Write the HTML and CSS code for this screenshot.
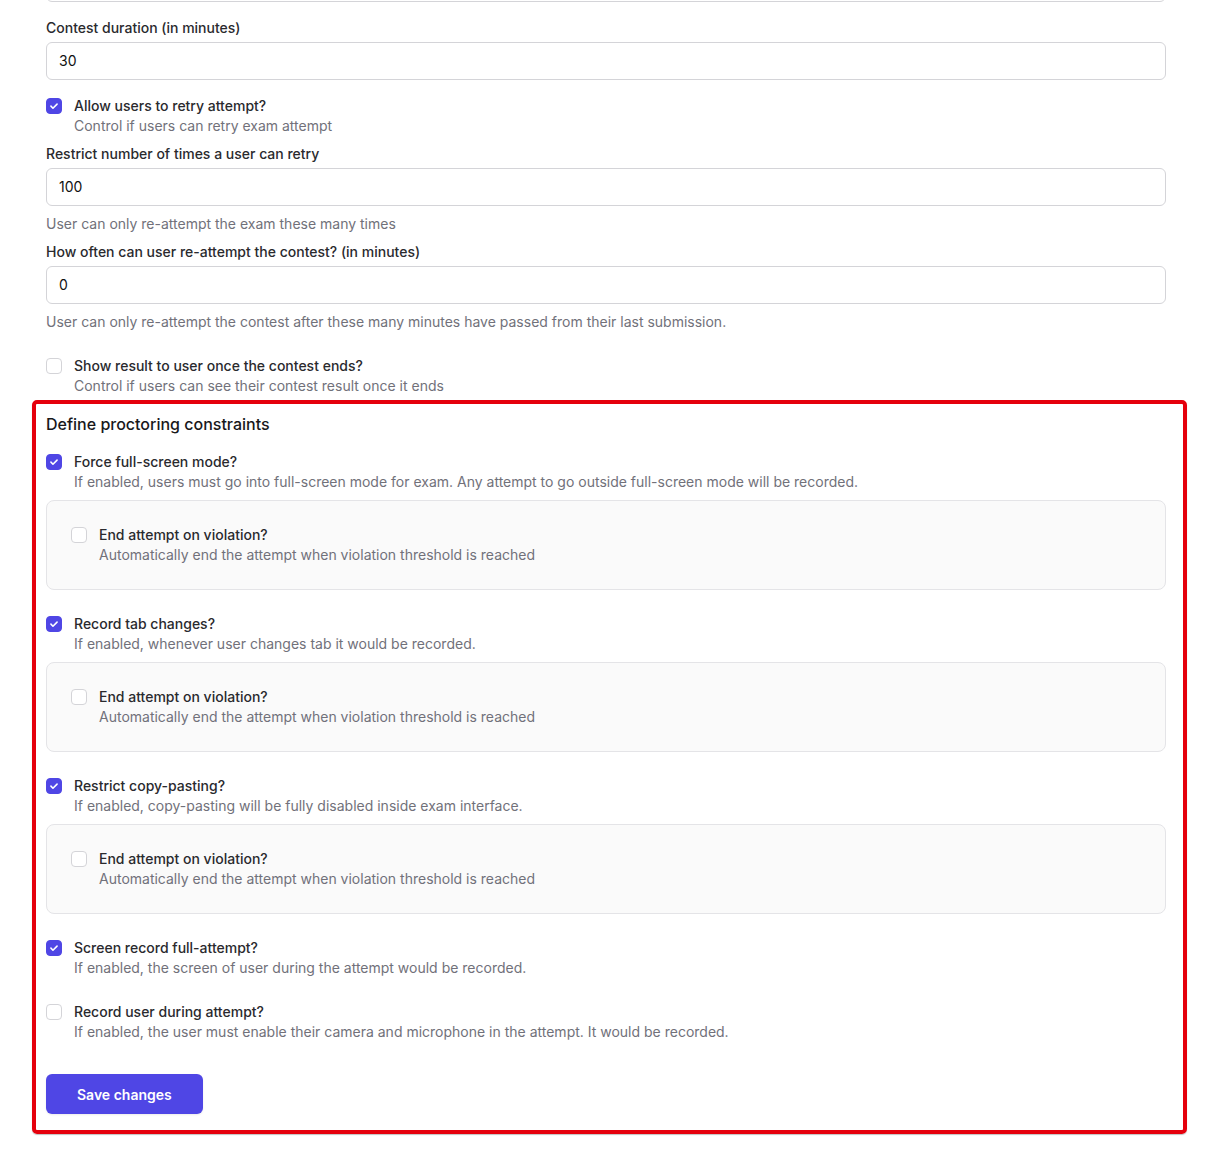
FILE: index.html
```html
<!DOCTYPE html>
<html>
<head>
<meta charset="utf-8">
<link rel="stylesheet" href="styles.css">
</head>
<body>
<div class="page">
  <div class="input cut"></div>

  <div class="field">
    <label class="label">Contest duration (in minutes)</label>
    <div class="input">30</div>
  </div>

  <div class="check-row mt16">
    <span class="cb on"><svg viewBox="0 0 16 16" width="16" height="16"><path d="M4.5 8.2l2.3 2.3 4.7-4.7" fill="none" stroke="#fff" stroke-width="1.8" stroke-linecap="round" stroke-linejoin="round"/></svg></span>
    <div class="check-text">
      <div class="check-title">Allow users to retry attempt?</div>
      <div class="check-desc">Control if users can retry exam attempt</div>
    </div>
  </div>

  <div class="field mt8">
    <label class="label">Restrict number of times a user can retry</label>
    <div class="input">100</div>
    <div class="help">User can only re-attempt the exam these many times</div>
  </div>

  <div class="field mt8">
    <label class="label">How often can user re-attempt the contest? (in minutes)</label>
    <div class="input">0</div>
    <div class="help">User can only re-attempt the contest after these many minutes have passed from their last submission.</div>
  </div>

  <div class="check-row mt24">
    <span class="cb"></span>
    <div class="check-text">
      <div class="check-title">Show result to user once the contest ends?</div>
      <div class="check-desc">Control if users can see their contest result once it ends</div>
    </div>
  </div>

  <section class="proctor">
    <h2 class="heading">Define proctoring constraints</h2>

    <div class="groups">
      <div class="group">
        <div class="check-row">
          <span class="cb on"><svg viewBox="0 0 16 16" width="16" height="16"><path d="M4.5 8.2l2.3 2.3 4.7-4.7" fill="none" stroke="#fff" stroke-width="1.8" stroke-linecap="round" stroke-linejoin="round"/></svg></span>
          <div class="check-text">
            <div class="check-title">Force full-screen mode?</div>
            <div class="check-desc">If enabled, users must go into full-screen mode for exam. Any attempt to go outside full-screen mode will be recorded.</div>
          </div>
        </div>
        <div class="subbox">
          <div class="check-row">
            <span class="cb"></span>
            <div class="check-text">
              <div class="check-title">End attempt on violation?</div>
              <div class="check-desc">Automatically end the attempt when violation threshold is reached</div>
            </div>
          </div>
        </div>
      </div>

      <div class="group">
        <div class="check-row">
          <span class="cb on"><svg viewBox="0 0 16 16" width="16" height="16"><path d="M4.5 8.2l2.3 2.3 4.7-4.7" fill="none" stroke="#fff" stroke-width="1.8" stroke-linecap="round" stroke-linejoin="round"/></svg></span>
          <div class="check-text">
            <div class="check-title">Record tab changes?</div>
            <div class="check-desc">If enabled, whenever user changes tab it would be recorded.</div>
          </div>
        </div>
        <div class="subbox">
          <div class="check-row">
            <span class="cb"></span>
            <div class="check-text">
              <div class="check-title">End attempt on violation?</div>
              <div class="check-desc">Automatically end the attempt when violation threshold is reached</div>
            </div>
          </div>
        </div>
      </div>

      <div class="group">
        <div class="check-row">
          <span class="cb on"><svg viewBox="0 0 16 16" width="16" height="16"><path d="M4.5 8.2l2.3 2.3 4.7-4.7" fill="none" stroke="#fff" stroke-width="1.8" stroke-linecap="round" stroke-linejoin="round"/></svg></span>
          <div class="check-text">
            <div class="check-title">Restrict copy-pasting?</div>
            <div class="check-desc">If enabled, copy-pasting will be fully disabled inside exam interface.</div>
          </div>
        </div>
        <div class="subbox">
          <div class="check-row">
            <span class="cb"></span>
            <div class="check-text">
              <div class="check-title">End attempt on violation?</div>
              <div class="check-desc">Automatically end the attempt when violation threshold is reached</div>
            </div>
          </div>
        </div>
      </div>

      <div class="group">
        <div class="check-row">
          <span class="cb on"><svg viewBox="0 0 16 16" width="16" height="16"><path d="M4.5 8.2l2.3 2.3 4.7-4.7" fill="none" stroke="#fff" stroke-width="1.8" stroke-linecap="round" stroke-linejoin="round"/></svg></span>
          <div class="check-text">
            <div class="check-title">Screen record full-attempt?</div>
            <div class="check-desc">If enabled, the screen of user during the attempt would be recorded.</div>
          </div>
        </div>
      </div>

      <div class="group">
        <div class="check-row">
          <span class="cb"></span>
          <div class="check-text">
            <div class="check-title">Record user during attempt?</div>
            <div class="check-desc">If enabled, the user must enable their camera and microphone in the attempt. It would be recorded.</div>
          </div>
        </div>
      </div>
    </div>

    <button class="btn">Save changes</button>
  </section>
</div>
</body>
</html>
```

FILE: styles.css
```css
* { box-sizing: border-box; }
html, body { margin: 0; padding: 0; background: #fff; }
body {
  font-family: Inter, "Noto Sans", "Liberation Sans", sans-serif;
  font-size: 14px;
  line-height: 20px;
  color: #1f2328;
}
.page {
  width: 1120px;
  margin-left: 46px;
  padding-bottom: 29px;
}
.input {
  height: 38px;
  border: 1px solid #d4d4d8;
  border-radius: 6px;
  padding: 0 12px;
  display: flex;
  align-items: center;
  font-size: 14px;
  color: #111;
  background: #fff;
}
.input.cut { margin-top: -36px; margin-bottom: 16px; }
.field { display: flex; flex-direction: column; }
.label { display: block; margin-bottom: 4px; font-weight: 500; color: #2a2a2e; }
.help { margin-top: 8px; color: #71717a; }
.mt8 { margin-top: 8px; }
.mt16 { margin-top: 16px; }
.mt24 { margin-top: 24px; }

.check-row { display: flex; align-items: flex-start; gap: 12px; }
.cb {
  flex: none;
  width: 16px; height: 16px;
  margin-top: 2px;
  border: 1px solid #d4d4d8;
  border-radius: 4px;
  background: #fff;
  display: flex;
  align-items: center;
  justify-content: center;
}
.cb.on { background: #4f46e5; border-color: #4f46e5; }
.cb svg { display: block; }
.check-title { font-weight: 500; color: #2a2a2e; }
.check-desc { color: #71717a; }

.proctor {
  margin: 4px -21px 0 -14px;
  border: 4px solid #e5000c;
  border-radius: 5px;
  padding: 8px 17px 16px 10px;
  box-shadow: 0 1px 1px rgba(0,0,0,0.25);
}
.heading {
  margin: 0 0 16px;
  font-size: 16px;
  line-height: 24px;
  font-weight: 500;
  color: #18181b;
}
.groups { display: flex; flex-direction: column; gap: 24px; }
.group { display: flex; flex-direction: column; gap: 8px; }
.subbox {
  background: #fafafa;
  border: 1px solid #e4e4e7;
  border-radius: 8px;
  padding: 24px;
}
.btn {
  margin-top: 32px;
  height: 40px;
  padding: 0 31px;
  background: #4f46e5;
  color: #fff;
  border: none;
  border-radius: 6px;
  font-family: inherit;
  font-size: 14px;
  font-weight: 600;
  box-shadow: 0 1px 2px rgba(0,0,0,0.08);
}
```
